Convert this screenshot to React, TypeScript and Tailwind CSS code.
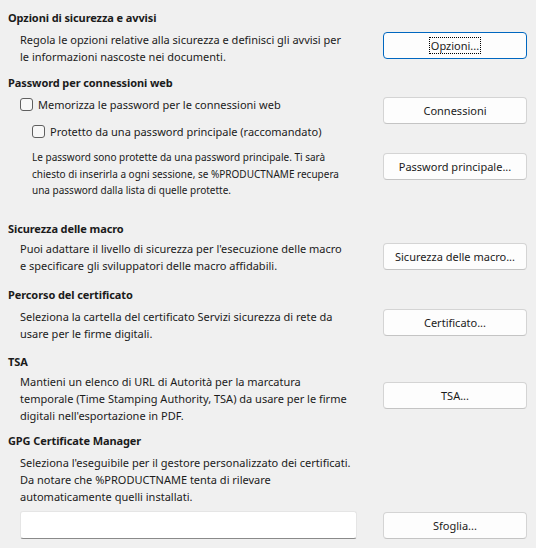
import React from "react";

const font = { fontFamily: '"Noto Sans", "Liberation Sans", sans-serif' };

const Heading = ({ children, className = "" }: { children: React.ReactNode; className?: string }) => (
  <h2 className={`pl-2 text-[11px] leading-[17px] font-bold tracking-[-0.1px] text-[#1b1b1b] ${className}`}>
    {children}
  </h2>
);

const Button = ({
  children,
  className = "",
  focused = false,
}: {
  children: React.ReactNode;
  className?: string;
  focused?: boolean;
}) => (
  <button
    className={`w-[144px] h-[27px] shrink-0 rounded-[4px] bg-[#fdfdfd] text-[11px] text-[#1b1b1b] flex items-center justify-center ${
      focused ? "border border-[#0067c0]" : "border border-[#d4d4d4] border-b-[#c4c4c4]"
    } ${className}`}
  >
    {focused ? (
      <span className="outline outline-1 outline-dotted outline-black leading-[15px] px-[1px]">{children}</span>
    ) : (
      children
    )}
  </button>
);

const Checkbox = ({ label, className = "" }: { label: string; className?: string }) => (
  <label className={`flex items-center gap-[5px] h-[17px] ${className}`}>
    <span className="w-[13px] h-[13px] rounded-[3px] border border-[#5f5f5f] bg-[#f7f7f7]" />
    <span>{label}</span>
  </label>
);

export default function App() {
  return (
    <div
      className="w-[536px] h-[548px] bg-[#f0f0f0] text-[11px] leading-[17px] text-[#1b1b1b] overflow-hidden pr-[9px]"
      style={font}
    >
      <Heading className="pt-[9px]">Opzioni di sicurezza e avvisi</Heading>
      <div className="flex items-start justify-between mt-[5px]">
        <p className="pl-5">
          Regola le opzioni relative alla sicurezza e definisci gli avvisi per
          <br />
          le informazioni nascoste nei documenti.
        </p>
        <Button focused className="mt-[1px]">Opzioni...</Button>
      </div>

      <Heading className="mt-[9px]">Password per connessioni web</Heading>
      <div className="flex items-start justify-between mt-[5px]">
        <div className="pl-5">
          <Checkbox label="Memorizza le password per le connessioni web" />
          <Checkbox className="mt-[10px] pl-3" label="Protetto da una password principale (raccomandato)" />
        </div>
        <Button className="mt-[1px]">Connessioni</Button>
      </div>
      <div className="flex items-start justify-between mt-[9px]">
        <p className="pl-8 text-[10px] leading-[16.5px]">
          Le password sono protette da una password principale. Ti sarà
          <br />
          chiesto di inserirla a ogni sessione, se %PRODUCTNAME recupera
          <br />
          una password dalla lista di quelle protette.
        </p>
        <Button className="mt-[4px]">Password principale...</Button>
      </div>

      <Heading className="mt-[21px]">Sicurezza delle macro</Heading>
      <div className="flex items-start justify-between mt-[3px]">
        <p className="pl-5">
          Puoi adattare il livello di sicurezza per l'esecuzione delle macro
          <br />
          e specificare gli sviluppatori delle macro affidabili.
        </p>
        <Button className="mt-[3px]">Sicurezza delle macro...</Button>
      </div>

      <Heading className="mt-[12px]">Percorso del certificato</Heading>
      <div className="flex items-start justify-between mt-[5px]">
        <p className="pl-5">
          Seleziona la cartella del certificato Servizi sicurezza di rete da
          <br />
          usare per le firme digitali.
        </p>
        <Button className="mt-[1px]">Certificato...</Button>
      </div>

      <Heading className="mt-[11px]">TSA</Heading>
      <div className="flex items-start justify-between mt-[3px]">
        <p className="pl-5">
          Mantieni un elenco di URL di Autorità per la marcatura
          <br />
          temporale (Time Stamping Authority, TSA) da usare per le firme
          <br />
          digitali nell'esportazione in PDF.
        </p>
        <Button className="mt-[9px]">TSA...</Button>
      </div>

      <Heading className="mt-[8px]">GPG Certificate Manager</Heading>
      <p className="pl-5 mt-[5px]">
        Seleziona l'eseguibile per il gestore personalizzato dei certificati.
        <br />
        Da notare che %PRODUCTNAME tenta di rilevare
        <br />
        automaticamente quelli installati.
      </p>
      <div className="flex items-start justify-between mt-[6px]">
        <input
          className="ml-5 w-[337px] h-[28px] bg-white border border-[#e5e5e5] border-b-[#8a8a8a] rounded-[3px] outline-none"
          type="text"
        />
        <Button className="mt-[1px]">Sfoglia...</Button>
      </div>
    </div>
  );
}
